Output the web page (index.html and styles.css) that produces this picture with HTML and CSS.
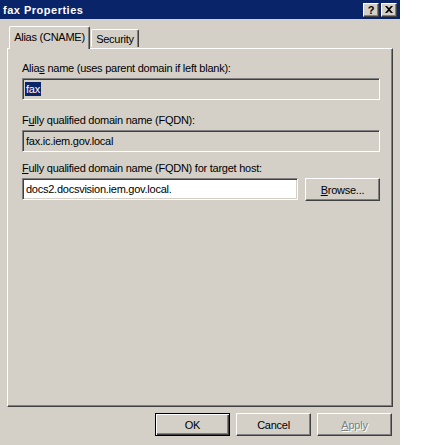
FILE: index.html
```html
<!DOCTYPE html>
<html>
<head>
<meta charset="utf-8">
<link rel="stylesheet" href="styles.css">
</head>
<body>
<div class="dialog">
  <div class="titlebar">
    <span class="title">fax Properties</span>
    <div class="caption-buttons">
      <div class="cap-btn help">?</div>
      <div class="cap-btn close">
        <svg width="8" height="7" viewBox="0 0 8 7"><path d="M0 0h2l2 2 2-2h2L5 3.5 8 7H6L4 5 2 7H0l3-3.5z" fill="#000"/></svg>
      </div>
    </div>
  </div>
  <div class="content">
    <div class="tabs">
      <div class="tab selected">Alias (CNAME)</div>
      <div class="tab">Security</div>
    </div>
    <div class="panel">
      <div class="field first">
        <div class="label">Alia<u>s</u> name (uses parent domain if left blank):</div>
        <div class="textbox disabled"><span class="sel">fax</span></div>
      </div>
      <div class="field second">
        <div class="label">F<u>u</u>lly qualified domain name (FQDN):</div>
        <div class="textbox disabled">fax.ic.iem.gov.local</div>
      </div>
      <div class="field third">
        <div class="label"><u>F</u>ully qualified domain name (FQDN) for target host:</div>
        <div class="row">
          <div class="textbox white">docs2.docsvision.iem.gov.local.</div>
          <div class="button"><u>B</u>rowse...</div>
        </div>
      </div>
    </div>
    <div class="footer">
      <div class="button default">OK</div>
      <div class="button">Cancel</div>
      <div class="button disabled-btn"><u>A</u>pply</div>
    </div>
  </div>
</div>
</body>
</html>
```
FILE: styles.css
```css
html, body {
  margin: 0;
  padding: 0;
  background: #ffffff;
}
body {
  font-family: "Liberation Sans", Arial, sans-serif;
  font-size: 11px;
  letter-spacing: -0.25px;
  color: #000;
}
.dialog {
  width: 400px;
  height: 445px;
  background: #d4d0c8;
  overflow: hidden;
}
.titlebar {
  height: 19px;
  background: #0a246a;
  color: #fff;
  display: flex;
  align-items: center;
  justify-content: space-between;
  padding: 0 3px 0 3px;
}
.title {
  font-weight: bold;
  font-size: 11px;
  letter-spacing: 0.5px;
}
.caption-buttons {
  display: flex;
  gap: 2px;
}
.cap-btn {
  width: 16px;
  height: 14px;
  box-sizing: border-box;
  background: #d4d0c8;
  border-top: 1px solid #ffffff;
  border-left: 1px solid #ffffff;
  border-right: 1px solid #404040;
  border-bottom: 1px solid #404040;
  box-shadow: inset -1px -1px 0 #808080;
  display: flex;
  align-items: center;
  justify-content: center;
  color: #000;
}
.cap-btn.help {
  font-weight: bold;
  font-size: 11px;
  line-height: 12px;
  letter-spacing: 0;
}
.content {
  padding: 7px 7px 0 7px;
}
.tabs {
  display: flex;
  align-items: flex-end;
  height: 22px;
  padding-left: 2px;
  position: relative;
  z-index: 2;
}
.tab {
  box-sizing: border-box;
  height: 18px;
  background: #d4d0c8;
  border-top: 1px solid #ffffff;
  border-left: 1px solid #ffffff;
  border-right: 1px solid #404040;
  box-shadow: inset -1px 0 0 #808080;
  border-radius: 2px 2px 0 0;
  display: flex;
  align-items: center;
  justify-content: center;
  width: 48px;
  margin-left: 1px;
  margin-bottom: 1px;
  padding-top: 1px;
}
.tab.selected {
  height: 23px;
  width: 81px;
  margin-left: 0;
  margin-bottom: -1px;
  padding-top: 0;
  padding-bottom: 2px;
}
.panel {
  box-sizing: border-box;
  width: 386px;
  height: 359px;
  border-top: 1px solid #ffffff;
  border-left: 1px solid #ffffff;
  border-right: 1px solid #404040;
  border-bottom: 1px solid #404040;
  box-shadow: inset -1px -1px 0 #808080;
  padding: 13px 12px 0 14px;
  position: relative;
  z-index: 1;
}
.label {
  height: 13px;
  line-height: 13px;
  margin-bottom: 3px;
  white-space: nowrap;
}
.field.second {
  margin-top: 14px;
}
.field.third {
  margin-top: 10px;
}
.textbox {
  box-sizing: border-box;
  height: 22px;
  border-top: 1px solid #808080;
  border-left: 1px solid #808080;
  border-right: 1px solid #ffffff;
  border-bottom: 1px solid #ffffff;
  box-shadow: inset 1px 1px 0 #404040, inset -1px -1px 0 #d4d0c8;
  padding: 0 3px;
  line-height: 20px;
  white-space: nowrap;
}
.textbox.disabled {
  background: #d4d0c8;
}
.textbox.white {
  background: #ffffff;
}
.sel {
  background: #0a246a;
  color: #ffffff;
  padding: 1px 1px;
  margin-left: -1px;
}
.row {
  display: flex;
  gap: 7px;
  align-items: flex-start;
}
.row .textbox {
  flex: 1;
}
.button {
  box-sizing: border-box;
  width: 75px;
  height: 23px;
  background: #d4d0c8;
  border-top: 1px solid #ffffff;
  border-left: 1px solid #ffffff;
  border-right: 1px solid #404040;
  border-bottom: 1px solid #404040;
  box-shadow: inset -1px -1px 0 #808080;
  display: flex;
  align-items: center;
  justify-content: center;
}
.button.default {
  border: 1px solid #000000;
  box-shadow: inset 1px 1px 0 #ffffff, inset -1px -1px 0 #404040, inset -2px -2px 0 #808080;
}
.button.disabled-btn {
  color: #808080;
  text-shadow: 1px 1px 0 #ffffff;
}
.footer {
  display: flex;
  justify-content: flex-end;
  gap: 6px;
  margin-top: 6px;
  padding-right: 1px;
}
```
